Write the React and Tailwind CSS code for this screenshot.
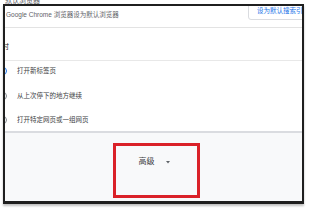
export default function App() {
  const rows = [
    { label: '打开新标签页', checked: true },
    { label: '从上次停下的地方继续', checked: false },
    { label: '打开特定网页或一组网页', checked: false },
  ];

  return (
    <div className="w-[310px] h-[211px] bg-white overflow-hidden font-['Liberation_Sans','Noto_Sans_CJK_SC',sans-serif]">
      {/* heading cut off above the frame */}
      <div className="h-[4px] overflow-hidden pl-[5px]">
        <div className="text-[7px] leading-[7px] -mt-[3px] text-[#5f6368] whitespace-nowrap">默认浏览器</div>
      </div>

      {/* framed settings panel */}
      <div className="ml-[3px] w-[301px] h-[200px] border-2 border-b-[3px] border-[#1f1f1f] overflow-hidden flex flex-col bg-white shadow-[0_2px_2px_rgba(0,0,0,0.25)]">
        <div className="h-[21px] flex items-start shrink-0">
          <div className="ml-[1px] mt-[5px] text-[6.5px] leading-[8px] text-[#5f6368] whitespace-nowrap">
            Google Chrome 浏览器设为默认浏览器
          </div>
          <div className="ml-auto -mr-[16px] -mt-[4px] h-[18px] shrink-0 border border-[#dadce0] rounded-[3px] px-[8px] flex items-center text-[6.5px] leading-[8px] text-[#1a73e8] whitespace-nowrap">
            设为默认搜索引擎
          </div>
        </div>
        <div className="h-px bg-[#e3e3e3] shrink-0" />

        <div className="h-[32px] shrink-0 flex items-center pt-[6px]">
          <div className="-ml-[17px] text-[7px] leading-[8px] text-[#202124] whitespace-nowrap">启动时</div>
        </div>
        <div className="h-px bg-[#e8e8e8] shrink-0" />

        <div className="h-[70px] shrink-0">
          <div className="-mt-[2px] flex flex-col">
            {rows.map((r) => (
              <div key={r.label} className="h-[24.5px] flex items-center">
                <div
                  className={`-ml-[6px] w-[8px] h-[8px] rounded-full border-[1.5px] flex items-center justify-center shrink-0 ${
                    r.checked ? 'border-[#1a73e8]' : 'border-[#80868b]'
                  }`}
                >
                  {r.checked && <div className="w-[3px] h-[3px] rounded-full bg-[#1a73e8]" />}
                </div>
                <div className="ml-[10px] text-[6.5px] leading-[8px] text-[#3c4043] whitespace-nowrap">{r.label}</div>
              </div>
            ))}
          </div>
        </div>
        <div className="h-[2px] bg-[#dadce0] shrink-0" />

        <div className="flex-1 bg-[#f8f9fa]">
          <div className="ml-[108px] mt-[10px] w-[87px] h-[55px] border-[3.5px] border-[#da2128] flex items-start pl-[22.5px] pt-[11.5px]">
            <div className="text-[8px] leading-[8px] text-[#3c4043] whitespace-nowrap">高级</div>
            <svg className="ml-[11px] mt-[3px]" width="4" height="3" viewBox="0 0 4 3">
              <path d="M0 0 L4 0 L2 2.5 Z" fill="#5f6368" />
            </svg>
          </div>
        </div>
      </div>
    </div>
  );
}
